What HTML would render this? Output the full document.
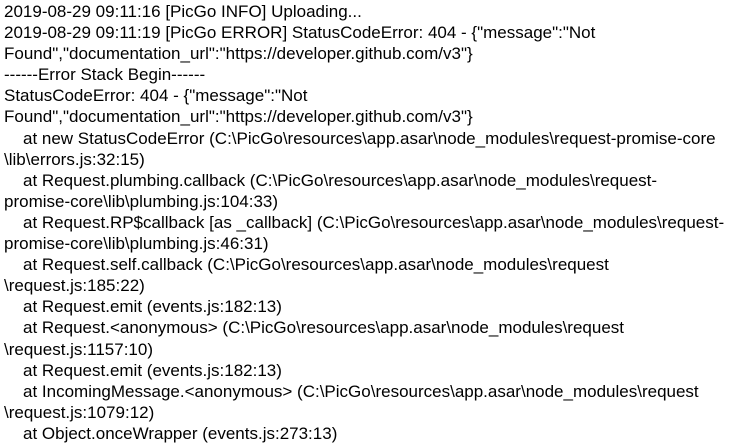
<!DOCTYPE html>
<html><head><meta charset="utf-8"><style>
html,body{margin:0;padding:0;background:#fff;width:735px;height:444px;overflow:hidden}
body{font-family:"Liberation Sans","Noto Sans CJK SC",sans-serif;font-size:17px;color:#000;padding-top:1px}
div{white-space:pre;line-height:21.1px;height:21.1px;padding-left:4px}
.i{padding-left:23px}
</style></head><body>
<div>2019-08-29 09:11:16 [PicGo INFO] Uploading...</div>
<div>2019-08-29 09:11:19 [PicGo ERROR] StatusCodeError: 404 - {"message":"Not</div>
<div>Found","documentation_url":"https://developer.github.com/v3"}</div>
<div>------Error Stack Begin------</div>
<div>StatusCodeError: 404 - {"message":"Not</div>
<div>Found","documentation_url":"https://developer.github.com/v3"}</div>
<div class="i">at new StatusCodeError (C:\PicGo\resources\app.asar\node_modules\request-promise-core</div>
<div>\lib\errors.js:32:15)</div>
<div class="i">at Request.plumbing.callback (C:\PicGo\resources\app.asar\node_modules\request-</div>
<div>promise-core\lib\plumbing.js:104:33)</div>
<div class="i">at Request.RP$callback [as _callback] (C:\PicGo\resources\app.asar\node_modules\request-</div>
<div>promise-core\lib\plumbing.js:46:31)</div>
<div class="i">at Request.self.callback (C:\PicGo\resources\app.asar\node_modules\request</div>
<div>\request.js:185:22)</div>
<div class="i">at Request.emit (events.js:182:13)</div>
<div class="i">at Request.&lt;anonymous&gt; (C:\PicGo\resources\app.asar\node_modules\request</div>
<div>\request.js:1157:10)</div>
<div class="i">at Request.emit (events.js:182:13)</div>
<div class="i">at IncomingMessage.&lt;anonymous&gt; (C:\PicGo\resources\app.asar\node_modules\request</div>
<div>\request.js:1079:12)</div>
<div class="i">at Object.onceWrapper (events.js:273:13)</div>
</body></html>
